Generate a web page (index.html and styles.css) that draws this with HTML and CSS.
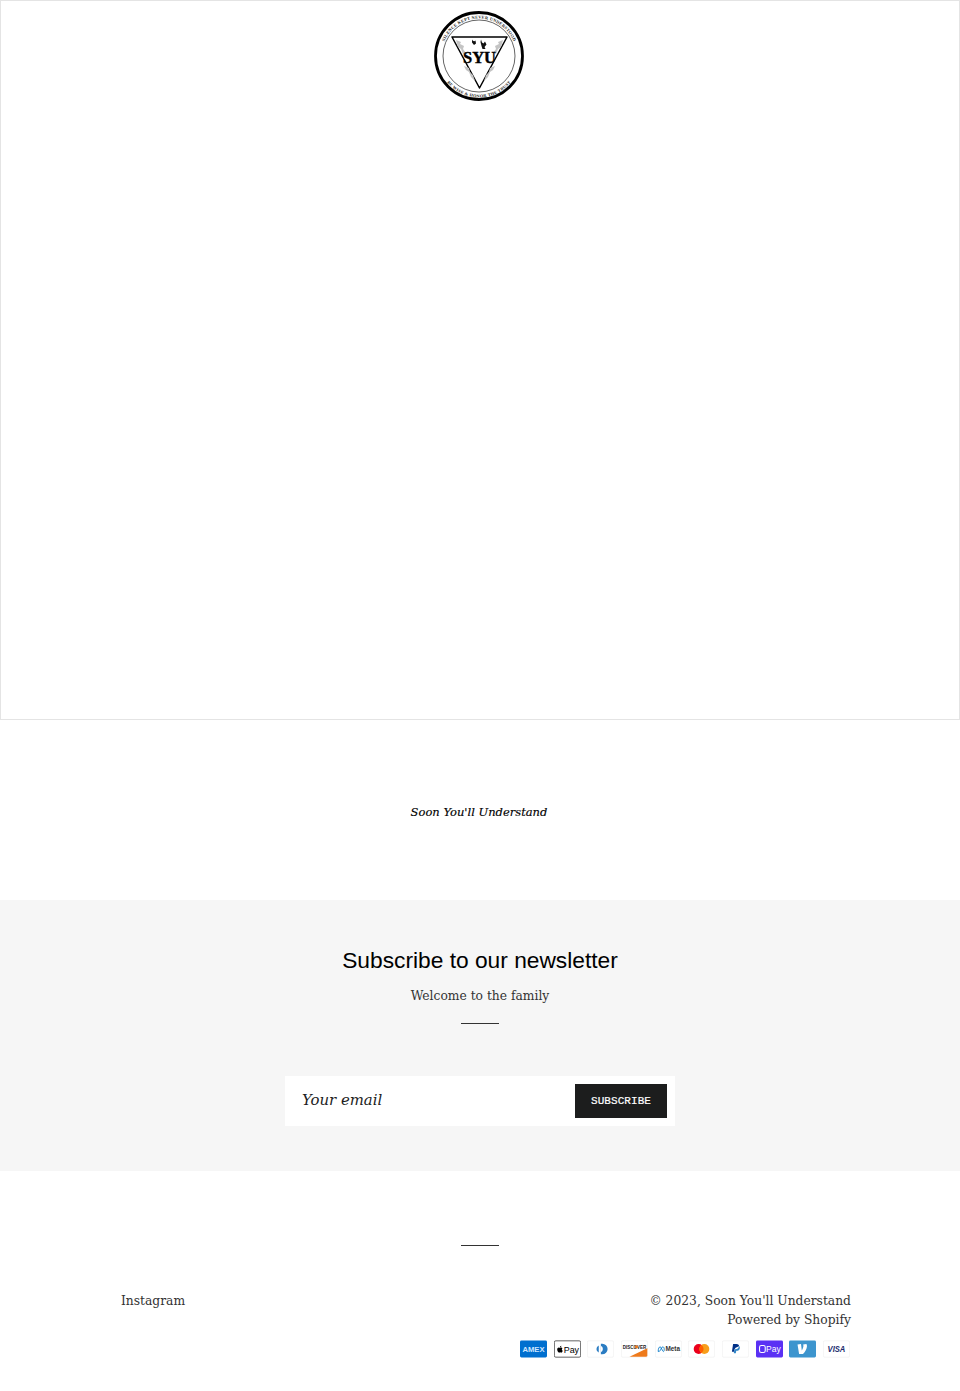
FILE: index.html
```html
<!DOCTYPE html>
<html lang="en">
<head>
<meta charset="utf-8">
<title>Soon You'll Understand</title>
<link rel="stylesheet" href="styles.css">
</head>
<body>
<header class="hero">
  <svg class="logo" viewBox="0 0 90 90" aria-label="SYU logo">
    <defs>
      <path id="arcTop" d="M7.500 45a37.500 37.500 0 0 1 75 0"/>
      <path id="arcBot" d="M3.500 45a41.500 41.500 0 0 0 83 0"/>
    </defs>
    <circle cx="45" cy="45" r="43.500" fill="#fff" stroke="#000" stroke-width="2.800"/>
    <circle cx="45" cy="45" r="36" fill="none" stroke="#222" stroke-width="0.700"/>
    <text class="ring-text"><textPath href="#arcTop" startOffset="50%" text-anchor="middle">SILENCE KEPT NEVER UNDERSTOOD</textPath></text>
    <text class="ring-text"><textPath href="#arcBot" startOffset="50%" text-anchor="middle">BE WISE &amp; HONOR THE TRUST</textPath></text>
    <path d="M18 26 L73 26 L45.500 77 Z" fill="#fff" stroke="#000" stroke-width="1.500" stroke-linejoin="round"/>
    <path d="M38 28.500c1 2 2.500 2 3.500 1l.5 3-2 1.500-2-2.500zM47 28.500l1 3 1.500 1 1.500-2 1.500 3-2 2.500 1 2h-3l-1-3-1-4z" fill="#111"/>
    <path d="M22 29l5 2-1 2 4 2-1 3 3 4-3 1-2-5-3-2zM69 29l-5 2 1 2-4 2 1 3-3 4 3 1 2-5 3-2zM30 55l5 2 1 4 3 3 2 6-4-4-2-5-3-2zM61 55l-5 2-1 4-3 3-2 6 4-4 2-5 3-2z" fill="#c4c4c4"/>
    <text class="logo-word" x="45.500" y="52" text-anchor="middle" textLength="33" lengthAdjust="spacingAndGlyphs">SYU</text>
  </svg>
</header>

<section class="brand">
  <p class="brand-text">Soon You'll Understand</p>
</section>

<section class="newsletter">
  <h2 class="news-title">Subscribe to our newsletter</h2>
  <p class="news-sub">Welcome to the family</p>
  <hr class="rule">
  <form class="news-form">
    <span class="news-input">Your email</span>
    <span class="news-btn">SUBSCRIBE</span>
  </form>
</section>

<footer class="footer">
  <hr class="rule">
  <div class="foot-row">
    <a class="foot-link">Instagram</a>
    <div class="foot-right">
      <p class="foot-line">© 2023, Soon You'll Understand</p>
      <p class="foot-line">Powered by Shopify</p>
      <div class="pay">
        <svg class="pay-icon" viewBox="0 0 38 24"><rect width="38" height="24" rx="2" fill="#006fcf"/><text class="t-amex" x="19" y="16" text-anchor="middle" textLength="31" lengthAdjust="spacingAndGlyphs">AMEX</text></svg>
        <svg class="pay-icon" viewBox="0 0 38 24"><rect x="0.500" y="0.500" width="37" height="23" rx="2" fill="#fff" stroke="#222"/><path transform="translate(1 2.500) scale(.8)" d="M11 8.200c.5-.6.800-1.300.7-2-.7 0-1.400.5-1.800 1-.4.500-.7 1.200-.6 1.900.7 0 1.300-.4 1.700-.9zm.7 1c-1-.1-1.800.5-2.300.5s-1.200-.5-2-.5c-1 0-2 .6-2.500 1.500-1.100 1.800-.3 4.600.8 6.100.5.700 1.100 1.500 1.900 1.500.8 0 1-.5 2-.5s1.200.5 2 .5 1.300-.7 1.800-1.500c.6-.8.800-1.600.8-1.700 0 0-1.600-.6-1.600-2.300 0-1.500 1.200-2.100 1.300-2.200-.7-1-1.800-1.300-2.200-1.400z" fill="#000"/><text class="t-apple" x="24.500" y="17" text-anchor="middle">Pay</text></svg>
        <svg class="pay-icon" viewBox="0 0 38 24"><rect x="0.500" y="0.500" width="37" height="23" rx="2" fill="#fff" stroke="#f0f0f0"/><path d="M19.500 4.500h2a7.500 7.500 0 0 1 0 15h-2z" fill="#2a7cc2"/><path d="M16.500 7a5.500 5.500 0 0 0 0 10z" fill="#2a7cc2"/><path d="M19.500 7.500a5 5 0 0 1 0 9z" fill="#fff"/></svg>
        <svg class="pay-icon" viewBox="0 0 38 24"><rect x="0.500" y="0.500" width="37" height="23" rx="2" fill="#fff" stroke="#f0f0f0"/><path d="M12 23L37 11v10a2 2 0 0 1-2 2z" fill="#ee7a1b"/><text class="t-disc" x="19" y="11.500" text-anchor="middle" textLength="33" lengthAdjust="spacingAndGlyphs">DISCOVER</text><circle cx="21.500" cy="9" r="2.400" fill="#ee7a1b"/></svg>
        <svg class="pay-icon" viewBox="0 0 38 24"><rect x="0.500" y="0.500" width="37" height="23" rx="2" fill="#fff" stroke="#f0f0f0"/><path d="M4.500 15.500c0-4 1.200-6.500 2.700-6.500 2 0 3 6.500 4.500 6.500.9 0 1.300-1 1.300-3 0-2.200-.8-3.500-2-3.500-1.500 0-2.600 3.200-3.800 5.200-.6 1-1.200 1.300-1.700 1.300z" fill="none" stroke="#0a7cc9" stroke-width="1.300"/><text class="t-meta" x="25" y="15.500" text-anchor="middle">Meta</text></svg>
        <svg class="pay-icon" viewBox="0 0 38 24"><rect x="0.500" y="0.500" width="37" height="23" rx="2" fill="#fff" stroke="#f0f0f0"/><circle cx="15" cy="12" r="7" fill="#eb001b"/><circle cx="23" cy="12" r="7" fill="#f79e1b"/><path d="M19 6.300a7 7 0 0 1 0 11.400 7 7 0 0 1 0-11.400z" fill="#ff5f00"/></svg>
        <svg class="pay-icon" viewBox="0 0 38 24"><rect x="0.500" y="0.500" width="37" height="23" rx="2" fill="#fff" stroke="#f0f0f0"/><path d="M23.900 8.300c.2-1 0-1.700-.6-2.300-.6-.7-1.700-1-3.100-1h-4.100c-.3 0-.5.200-.6.500L14 15.600c0 .2.100.4.300.4H17l.4-3.400 1.800-2.200 4.700-2.100z" fill="#003087"/><path d="M23.900 8.300l-.2.200c-.5 2.800-2.200 3.800-4.600 3.800H18c-.3 0-.5.200-.6.500l-.6 3.900-.2 1c0 .2.100.4.300.4h2.100c.3 0 .5-.2.500-.4l.5-2.900c.1-.2.300-.4.500-.4h.4c2.100 0 3.700-.8 4.100-3.200.3-1.500.1-2.400-.7-3z" fill="#3086c8"/></svg>
        <svg class="pay-icon" viewBox="0 0 38 24"><rect width="38" height="24" rx="2" fill="#5a31f4"/><rect x="5" y="7" width="8" height="10" rx="2.500" fill="none" stroke="#fff" stroke-width="1.500"/><text class="t-shop" x="24.500" y="16.500" text-anchor="middle">Pay</text></svg>
        <svg class="pay-icon" viewBox="0 0 38 24"><rect width="38" height="24" rx="2" fill="#3d95ce"/><path d="M24.500 6.500c.5.900.8 1.800.8 3 0 3.600-3.100 8.300-5.600 11h-5.500L12 7l4.900-.5 1.100 9c1-1.700 2.300-4.400 2.300-6.200 0-1-.2-1.700-.4-2.200z" fill="#fff" transform="translate(0 -1.500)"/></svg>
        <svg class="pay-icon" viewBox="0 0 38 24"><rect x="0.500" y="0.500" width="37" height="23" rx="2" fill="#fff" stroke="#f0f0f0"/><text class="t-visa" x="19" y="16.500" text-anchor="middle" textLength="25" lengthAdjust="spacingAndGlyphs">VISA</text></svg>
      </div>
    </div>
  </div>
</footer>
</body>
</html>
```
FILE: styles.css
```css
* { box-sizing: border-box; }
html, body { margin: 0; padding: 0; background: #fff; }
body { font-family: "DejaVu Serif", "Liberation Serif", serif; color: #1c1d1d; }
p, h2 { margin: 0; }

.hero { height: 720px; border: 1px solid #e4e4e4; display: flex; justify-content: center; align-items: flex-start; padding-top: 10px; }
.logo { width: 90px; height: 90px; display: block; margin-left: -2px; }
.ring-text { font: 700 4.300px "Liberation Serif", serif; fill: #222; letter-spacing: .3px; }
.logo-word { font: 700 17px "Liberation Serif", serif; fill: #000; stroke: #000; stroke-width: .4px; }

.brand { height: 180px; display: flex; align-items: center; justify-content: center; padding-top: 6px; }
.brand-text { font-size: 11.500px; font-style: italic; color: #000; line-height: 1; margin-left: -2px; -webkit-text-stroke: .15px #000; }

.newsletter { background: #f6f6f6; height: 271px; display: flex; flex-direction: column; align-items: center; padding-top: 45px; }
.news-title { font: 400 22.750px/30px "Liberation Sans", Arial, sans-serif; color: #000; }
.news-sub { font-size: 12.300px; line-height: 20px; margin-top: 10.500px; color: #333; }
.rule { width: 38px; height: 1px; border: 0; background: #333; margin: 0; flex: none; }
.newsletter .rule { margin-top: 17.500px; }
.news-form { width: 390px; height: 50px; background: #fff; margin-top: 52px; display: flex; align-items: center; justify-content: space-between; padding: 0 8px 0 17px; }
.news-input { font-size: 14.900px; font-style: italic; color: #1c1d1d; margin-top: -3px; }
.news-btn { width: 92px; height: 34px; background: #1c1d1d; color: #fff; display: flex; align-items: center; justify-content: center; padding-bottom: 1px; font: 400 11px "Liberation Mono", monospace; letter-spacing: .07px; -webkit-text-stroke: .2px #fff; }

.footer { padding-top: 74px; display: flex; flex-direction: column; align-items: center; }
.foot-row { width: 100%; display: flex; justify-content: space-between; align-items: flex-start; padding: 46px 109px 0 121px; }
.foot-link, .foot-line { font-size: 12.300px; line-height: 19px; color: #333; }
.foot-right { display: flex; flex-direction: column; align-items: flex-end; }
.pay { display: flex; gap: 6.700px; margin: 10px 1px 0 0; }
.pay-icon { width: 27px; height: 18px; display: block; }
.t-amex { font: 700 10px "Liberation Sans", sans-serif; fill: #cfe6ff; }
.t-apple { font: 400 12.500px "Liberation Sans", sans-serif; fill: #000; }
.t-disc { font: 700 7px "Liberation Sans", sans-serif; fill: #222; }
.t-meta { font: 700 9px "Liberation Sans", sans-serif; fill: #333; }
.t-shop { font: 400 12px "Liberation Sans", sans-serif; fill: #fff; }
.t-visa { font: italic 700 12px "Liberation Sans", sans-serif; fill: #1a2a6c; }
```
